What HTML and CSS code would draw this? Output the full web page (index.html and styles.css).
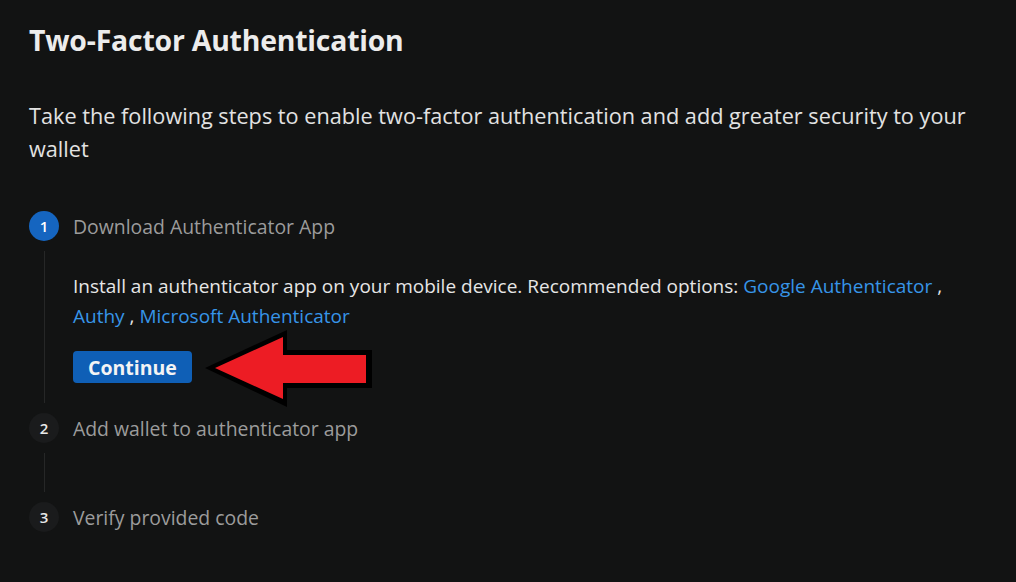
FILE: index.html
```html
<!doctype html>
<html lang="en">
<head>
    <meta charset="UTF-8">
    <link rel="stylesheet" href="styles.css">
    <title>Two-Factor Authentication</title>
</head>
<body>
    <div class="page">
        <h1 class="title">Two-Factor Authentication</h1>
        <p class="intro">Take the following steps to enable two-factor authentication and add greater security to your wallet</p>

        <ol class="steps">
            <li class="step active">
                <span class="num">1</span>
                <span class="label">Download Authenticator App</span>
                <div class="rail"></div>
                <div class="body">
                    <p class="text">Install an authenticator app on your mobile device. Recommended options: <a href="#">Google Authenticator</a> , <a href="#">Authy</a> , <a href="#">Microsoft Authenticator</a></p>
                    <div class="actions">
                        <button class="btn">Continue</button>
                        <svg class="arrow" width="180" height="88" viewBox="0 0 180 88">
                            <polygon points="10,43 92,5 92,25 177,25 177,63 92,63 92,82" fill="#000"/>
                            <polygon points="20,43 88,12 88,30 171,30 171,58 88,58 88,74" fill="#ed1c24"/>
                        </svg>
                    </div>
                </div>
            </li>
            <li class="step">
                <span class="num">2</span>
                <span class="label">Add wallet to authenticator app</span>
                <div class="rail"></div>
                <div class="body empty"></div>
            </li>
            <li class="step">
                <span class="num">3</span>
                <span class="label">Verify provided code</span>
            </li>
        </ol>
    </div>
</body>
</html>
```

FILE: styles.css
```css
body {
    margin: 0;
    background-color: #121313;
    font-family: "Open Sans", "Liberation Sans", sans-serif;
    color: #e4e4e4;
}

.page {
    padding: 20px 29px 0;
}

.title {
    margin: 0;
    font-size: 28.4px;
    font-weight: 700;
    line-height: 40px;
    color: #ececec;
    letter-spacing: -0.2px;
}

.intro {
    margin: 39px 0 0;
    font-size: 21.7px;
    line-height: 33px;
    color: #e2e2e2;
}

.steps {
    list-style: none;
    margin: 46px 0 0;
    padding: 0;
}

.step {
    display: grid;
    grid-template-columns: 30px 1fr;
    column-gap: 14px;
    align-items: center;
}

.num {
    width: 30px;
    height: 30px;
    border-radius: 50%;
    background-color: #1a1b1c;
    color: #e8e8e8;
    font-size: 15px;
    font-weight: 600;
    display: flex;
    align-items: center;
    justify-content: center;
}

.active .num {
    background-color: #1565c0;
    color: #fff;
}

.label {
    font-size: 19.4px;
    color: #9c9c9c;
}

.rail {
    align-self: stretch;
    justify-self: center;
    width: 1px;
    margin: 10px 0;
    background-color: #262727;
}

.body {
    padding: 30px 0;
}

.body.empty {
    padding: 0;
    height: 59px;
}

.text {
    margin: 0;
    font-size: 19px;
    line-height: 30px;
    color: #e6e6e6;
}

.text a {
    color: #3795e8;
    text-decoration: none;
}

.actions {
    position: relative;
    margin-top: 20px;
}

.btn {
    height: 32px;
    padding: 0 15px;
    border: 0;
    border-radius: 4px;
    background-color: #0f5fb6;
    color: #f4f4f4;
    font-family: inherit;
    font-size: 19.5px;
    font-weight: 700;
}

.arrow {
    position: absolute;
    left: 122px;
    top: -26px;
}
```
